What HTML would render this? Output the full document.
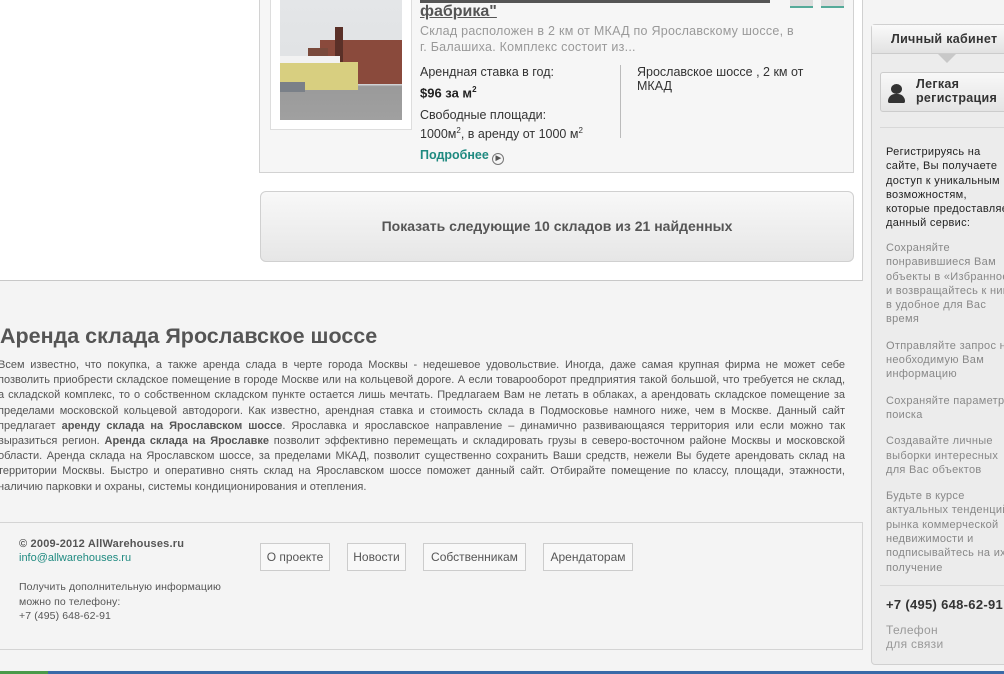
<!DOCTYPE html>
<html><head><meta charset="utf-8"><style>
*{margin:0;padding:0;box-sizing:border-box}
body{width:1004px;height:674px;overflow:hidden;background:#f4f4f4;font-family:"Liberation Sans",sans-serif;position:relative;color:#333}
.a{position:absolute}
.j div{text-align:justify;text-align-last:justify;white-space:nowrap}
.j div.l{text-align-last:left}
</style></head><body>
<div class="a" style="left:0;top:0;width:863px;height:281px;background:#fff;border-right:1px solid #d0d0d0;border-bottom:1px solid #c8c8c8"></div>
<div class="a" style="left:259px;top:-2px;width:595px;height:175px;background:#f6f6f6;border:1px solid #d2d2d2"></div>
<div class="a" style="left:270px;top:-2px;width:142px;height:132px;background:#fff;border:1px solid #ddd"></div>
<div class="a" style="left:280px;top:0;width:122px;height:120px;background:linear-gradient(#e4e6e8 0,#dfe1e3 70%,#9a9a9a 72%,#a0a0a0 100%);overflow:hidden">
 <div class="a" style="left:40px;top:40px;width:82px;height:44px;background:#8a4a3c"></div>
 <div class="a" style="left:28px;top:48px;width:20px;height:40px;background:#7a4a3c"></div>
 <div class="a" style="left:55px;top:27px;width:8px;height:45px;background:#5a3028"></div>
 <div class="a" style="left:0;top:62px;width:78px;height:28px;background:#d8cf80"></div>
 <div class="a" style="left:0;top:56px;width:60px;height:7px;background:#f2f2f2"></div>
 <div class="a" style="left:0;top:82px;width:25px;height:10px;background:#7a8088"></div>
</div>
<div class="a" style="left:420px;top:0;width:350px;height:3px;background:#555"></div>
<div class="a" style="left:420px;top:3px;font-size:16px;font-weight:bold;color:#555;text-decoration:underline">фабрика"</div>
<div class="a" style="left:790px;top:-4px;width:23px;height:12px;background:#ddd;border-bottom:2px solid #5a9"></div>
<div class="a" style="left:821px;top:-4px;width:23px;height:12px;background:#ddd;border-bottom:2px solid #5a9"></div>
<div class="a" style="left:420px;top:23px;width:385px;font-size:12.5px;line-height:16px;color:#999;letter-spacing:0.25px">Склад расположен в 2 км от МКАД по Ярославскому шоссе, в<br>г. Балашиха. Комплекс состоит из...</div>
<div class="a" style="left:420px;top:65px;font-size:12.5px;color:#333">Арендная ставка в год:</div>
<div class="a" style="left:420px;top:85px;font-size:13px;font-weight:bold;color:#222">$96 за м<sup style="font-size:8px">2</sup></div>
<div class="a" style="left:420px;top:108px;font-size:12.5px;line-height:15px;color:#333">Свободные площади:<br>1000м<sup style="font-size:8px">2</sup>, в аренду от 1000 м<sup style="font-size:8px">2</sup></div>
<div class="a" style="left:620px;top:65px;width:1px;height:73px;background:#bbb"></div>
<div class="a" style="left:637px;top:65px;width:190px;font-size:12.5px;line-height:14px;color:#333">Ярославское шоссе , 2 км от МКАД</div>
<div class="a" style="left:420px;top:148px;font-size:12.5px;font-weight:bold;color:#1f8a80">Подробнее <span style="display:inline-block;width:12px;height:12px;border:1px solid #777;border-radius:50%;font-size:7px;color:#555;text-align:center;line-height:10px;vertical-align:-1px">▶</span></div>
<div class="a" style="left:260px;top:191px;width:594px;height:71px;border:1px solid #d0d0d0;border-radius:6px;background:linear-gradient(#f8f8f8,#e6e6e6);font-size:14px;font-weight:bold;color:#555;text-align:center;line-height:69px">Показать следующие 10 складов из 21 найденных</div>
<div class="a" style="left:0;top:324px;font-size:21.5px;font-weight:bold;color:#555">Аренда склада Ярославское шоссе</div>
<div class="a j" style="left:-2px;top:358px;width:847px;font-size:11px;line-height:15.2px;color:#555">
<div>Всем известно, что покупка, а также аренда слада в черте города Москвы - недешевое удовольствие. Иногда, даже самая крупная фирма не может себе</div>
<div>позволить приобрести складское помещение в городе Москве или на кольцевой дороге. А если товарооборот предприятия такой большой, что требуется не склад,</div>
<div>а складской комплекс, то о собственном складском пункте остается лишь мечтать. Предлагаем Вам не летать в облаках, а арендовать складское помещение за</div>
<div>пределами московской кольцевой автодороги. Как известно, арендная ставка и стоимость склада в Подмосковье намного ниже, чем в Москве. Данный сайт</div>
<div>предлагает <b>аренду склада на Ярославском шоссе</b>. Ярославка и ярославское направление – динамично развивающаяся территория или если можно так</div>
<div>выразиться регион. <b>Аренда склада на Ярославке</b> позволит эффективно перемещать и складировать грузы в северо-восточном районе Москвы и московской</div>
<div>области. Аренда склада на Ярославском шоссе, за пределами МКАД, позволит существенно сохранить Ваши средств, нежели Вы будете арендовать склад на</div>
<div>территории Москвы. Быстро и оперативно снять склад на Ярославском шоссе поможет данный сайт. Отбирайте помещение по классу, площади, этажности,</div>
<div class="l">наличию парковки и охраны, системы кондиционирования и отепления.</div>
</div>
<div class="a" style="left:-2px;top:522px;width:865px;height:128px;background:#f4f4f4;border:1px solid #d4d4d4"></div>
<div class="a" style="left:19px;top:538px;font-size:11px;font-weight:bold;color:#555;letter-spacing:0.2px">© 2009-2012 AllWarehouses.ru</div>
<div class="a" style="left:19px;top:552px;font-size:11px;color:#1f8a80">info@allwarehouses.ru</div>
<div class="a" style="left:19px;top:580px;font-size:10.5px;line-height:14.5px;color:#555;letter-spacing:0.1px">Получить дополнительную информацию<br>можно по телефону:<br>+7 (495) 648-62-91</div>
<div class="a" style="left:260px;top:543px;width:70px;height:28px;border:1px solid #ccc;background:#f8f8f8;font-size:12px;line-height:26px;color:#555;text-align:center">О проекте</div>
<div class="a" style="left:347px;top:543px;width:59px;height:28px;border:1px solid #ccc;background:#f8f8f8;font-size:12px;line-height:26px;color:#555;text-align:center">Новости</div>
<div class="a" style="left:423px;top:543px;width:103px;height:28px;border:1px solid #ccc;background:#f8f8f8;font-size:12px;line-height:26px;color:#555;text-align:center">Собственникам</div>
<div class="a" style="left:543px;top:543px;width:90px;height:28px;border:1px solid #ccc;background:#f8f8f8;font-size:12px;line-height:26px;color:#555;text-align:center">Арендаторам</div>
<div class="a" style="left:0;top:671px;width:1004px;height:3px;background:#3a6aa8"></div>
<div class="a" style="left:0;top:671px;width:48px;height:3px;background:#4a9a4a"></div>
<div class="a" style="left:871px;top:24px;width:140px;height:641px;background:#ececec;border:1px solid #d0d0d0;border-radius:4px"></div>
<div class="a" style="left:872px;top:25px;width:135px;height:29px;background:linear-gradient(#fafafa,#e2e2e2);border-bottom:1px solid #ccc;font-size:12.5px;font-weight:bold;color:#333;line-height:28px;padding-left:19px;letter-spacing:0.3px">Личный кабинет</div>
<div class="a" style="left:938px;top:54px;width:0;height:0;border-left:9px solid transparent;border-right:9px solid transparent;border-top:9px solid #c8c8c8"></div>
<div class="a" style="left:880px;top:72px;width:130px;height:40px;background:linear-gradient(#f8f8f8,#e4e4e4);border:1px solid #ccc;border-radius:3px"></div>
<div class="a" style="left:891px;top:84px;width:11px;height:10px;border-radius:50%;background:#333"></div>
<div class="a" style="left:888px;top:94px;width:17px;height:9px;border-radius:8px 8px 2px 2px;background:#333"></div>
<div class="a" style="left:916px;top:77px;font-size:12.5px;font-weight:bold;line-height:14px;color:#333;letter-spacing:0.3px">Легкая<br>регистрация</div>
<div class="a" style="left:880px;top:127px;width:124px;height:1px;background:#d8d8d8"></div>
<div class="a" style="left:886px;top:145px;width:140px;font-size:11px;line-height:14.3px;color:#222;letter-spacing:0.3px;white-space:nowrap">Регистрируясь на<br>сайте, Вы получаете<br>доступ к уникальным<br>возможностям,<br>которые предоставляет<br>данный сервис:</div>
<div class="a" style="left:886px;top:241px;width:140px;font-size:11px;line-height:14.3px;color:#888;white-space:nowrap;letter-spacing:0.3px">
<p>Сохраняйте<br>понравившиеся Вам<br>объекты в «Избранное»<br>и возвращайтесь к ним<br>в удобное для Вас<br>время</p>
<p style="margin-top:12px">Отправляйте запрос на<br>необходимую Вам<br>информацию</p>
<p style="margin-top:12px">Сохраняйте параметры<br>поиска</p>
<p style="margin-top:12px">Создавайте личные<br>выборки интересных<br>для Вас объектов</p>
<p style="margin-top:12px">Будьте в курсе<br>актуальных тенденций<br>рынка коммерческой<br>недвижимости и<br>подписывайтесь на их<br>получение</p>
</div>
<div class="a" style="left:880px;top:585px;width:124px;height:1px;background:#d8d8d8"></div>
<div class="a" style="left:886px;top:597px;font-size:13px;font-weight:bold;color:#333;white-space:nowrap;letter-spacing:0.3px">+7 (495) 648-62-91</div>
<div class="a" style="left:886px;top:623px;font-size:12px;line-height:14px;color:#999;letter-spacing:0.3px">Телефон<br>для связи</div>
</body></html>
